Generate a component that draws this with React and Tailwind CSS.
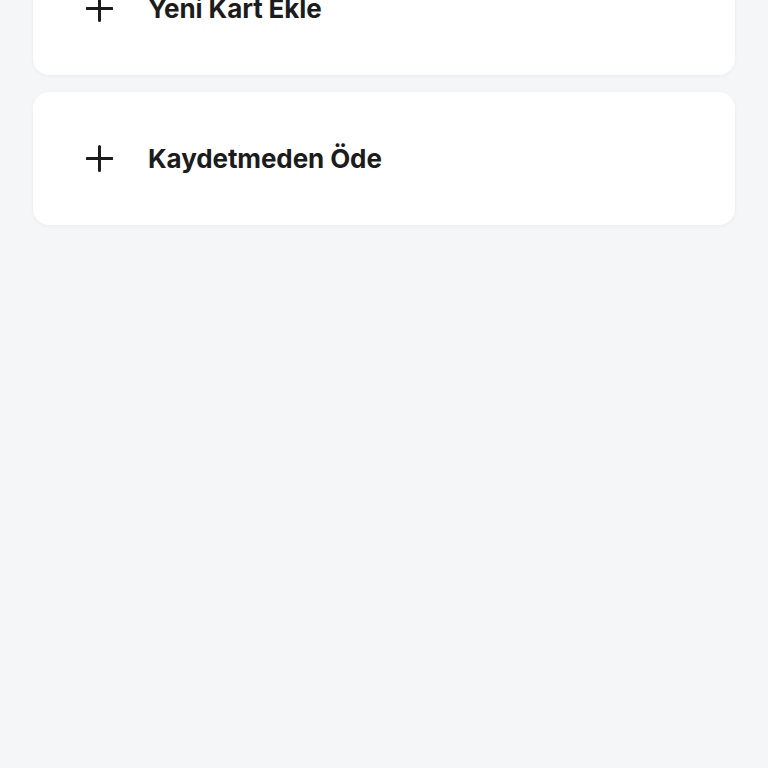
export default function App() {
  const Card = ({ label, extra = "" }) => (
    <div className={`h-[133px] bg-white rounded-[16px] shadow-[0_1px_4px_rgba(0,0,0,0.05)] flex items-center pl-[53px] ${extra}`}>
      <svg width="27" height="27" viewBox="0 0 27 27" className="shrink-0">
        <path d="M13.5 1.5V25.5M1 13.5H26" stroke="#1c1c1c" strokeWidth="3" strokeLinecap="round" />
      </svg>
      <span className="ml-[35px] text-[26px] font-bold text-[#1c1c1c] tracking-[-0.1px] leading-none" style={{ fontFamily: "Inter, 'Noto Sans', sans-serif" }}>
        {label}
      </span>
    </div>
  );
  return (
    <div className="w-[768px] h-[768px] overflow-hidden bg-[#f5f6f8]">
      <div className="px-[33px] flex flex-col gap-[17px]">
        <Card label="Yeni Kart Ekle" extra="-mt-[58px]" />
        <Card label="Kaydetmeden Öde" />
      </div>
    </div>
  );
}
